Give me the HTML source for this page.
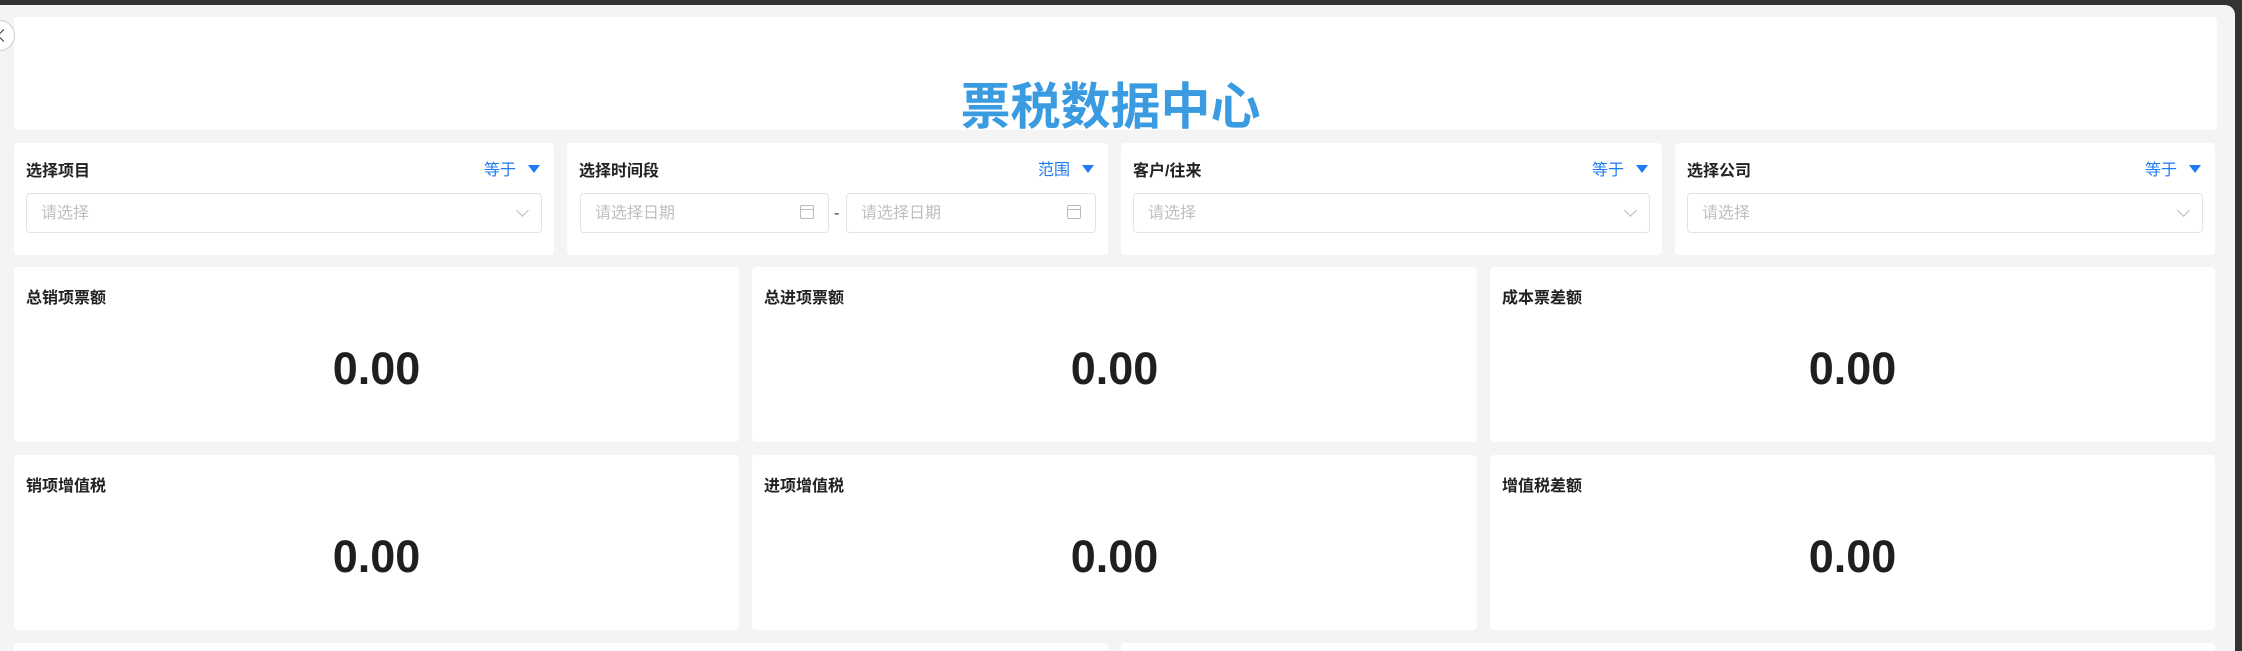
<!DOCTYPE html>
<html><head><meta charset="utf-8"><style>
*{box-sizing:border-box;margin:0;padding:0}
body{width:2242px;height:651px;overflow:hidden;background:#333;font-family:"Liberation Sans","Noto Sans CJK SC",sans-serif;position:relative}
.frame{position:absolute;left:0;top:5px;width:2235px;height:646px;background:#f4f4f4;border-top-right-radius:10px;overflow:hidden}
.card{position:absolute;background:#fff;border-radius:4px}
.title{position:absolute;left:0;right:0;top:60px;text-align:center;font-size:50px;font-weight:bold;color:#3a9be0;line-height:60px;padding-right:10px}
.lbl{position:absolute;left:12px;top:14px;font-size:16px;font-weight:bold;color:#222}
.op{position:absolute;right:14px;top:13px;font-size:16px;color:#1f7af5}
.op i{display:inline-block;width:0;height:0;border-left:6px solid transparent;border-right:6px solid transparent;border-top:8px solid #1f7af5;margin-left:12px;vertical-align:2px}
.inp{position:absolute;top:50px;height:40px;border:1px solid #e3e3e3;border-radius:4px;font-size:16px;color:#bfbfbf;padding:10px 14px;line-height:20px}
.chev{position:absolute;right:14px;top:12px;width:9px;height:9px;border-right:1px solid #bbb;border-bottom:1px solid #bbb;transform:rotate(45deg)}
.cal{position:absolute;right:14px;top:11px;width:14px;height:14px;border:1.5px solid #bbb;border-radius:2px}
.cal:after{content:"";position:absolute;left:0;right:0;top:3px;border-top:1.5px solid #bbb}
.slbl{position:absolute;left:12px;top:17px;font-size:16px;font-weight:bold;color:#222}
.val{position:absolute;left:0;right:0;top:76px;text-align:center;font-size:45px;font-weight:bold;color:#1f1f1f}
.back{position:absolute;left:-16px;top:15px;width:31px;height:31px;border-radius:50%;border:1px solid #ccc;background:#fff}
.back:after{content:"";position:absolute;left:14px;top:10px;width:8px;height:8px;border-left:1.5px solid #333;border-bottom:1.5px solid #333;transform:rotate(45deg)}
</style></head><body>
<div class="frame">
<div class="card" style="left:14px;top:12px;width:2203px;height:113px;overflow:hidden"><div class="title">票税数据中心</div></div>

<div class="card" style="left:14px;top:138px;width:540px;height:112px"><div class="lbl">选择项目</div><div class="op">等于<i></i></div><div class="inp" style="left:12px;width:516px">请选择<span class="chev"></span></div></div>
<div class="card" style="left:567px;top:138px;width:541px;height:112px"><div class="lbl">选择时间段</div><div class="op">范围<i></i></div>
<div class="inp" style="left:13px;width:249px">请选择日期<span class="cal"></span></div>
<div style="position:absolute;left:267px;top:62px;font-size:16px;color:#333">-</div>
<div class="inp" style="left:279px;width:250px">请选择日期<span class="cal"></span></div></div>
<div class="card" style="left:1121px;top:138px;width:541px;height:112px"><div class="lbl">客户/往来</div><div class="op">等于<i></i></div><div class="inp" style="left:12px;width:517px">请选择<span class="chev"></span></div></div>
<div class="card" style="left:1675px;top:138px;width:540px;height:112px"><div class="lbl">选择公司</div><div class="op">等于<i></i></div><div class="inp" style="left:12px;width:516px">请选择<span class="chev"></span></div></div>

<div class="card" style="left:14px;top:262px;width:725px;height:175px"><div class="slbl">总销项票额</div><div class="val">0.00</div></div>
<div class="card" style="left:752px;top:262px;width:725px;height:175px"><div class="slbl">总进项票额</div><div class="val">0.00</div></div>
<div class="card" style="left:1490px;top:262px;width:725px;height:175px"><div class="slbl">成本票差额</div><div class="val">0.00</div></div>
<div class="card" style="left:14px;top:450px;width:725px;height:175px"><div class="slbl">销项增值税</div><div class="val">0.00</div></div>
<div class="card" style="left:752px;top:450px;width:725px;height:175px"><div class="slbl">进项增值税</div><div class="val">0.00</div></div>
<div class="card" style="left:1490px;top:450px;width:725px;height:175px"><div class="slbl">增值税差额</div><div class="val">0.00</div></div>
<div class="card" style="left:14px;top:638px;width:1094px;height:40px"></div>
<div class="card" style="left:1121px;top:638px;width:1094px;height:40px"></div>
<div class="back"></div>
</div>
</body></html>
